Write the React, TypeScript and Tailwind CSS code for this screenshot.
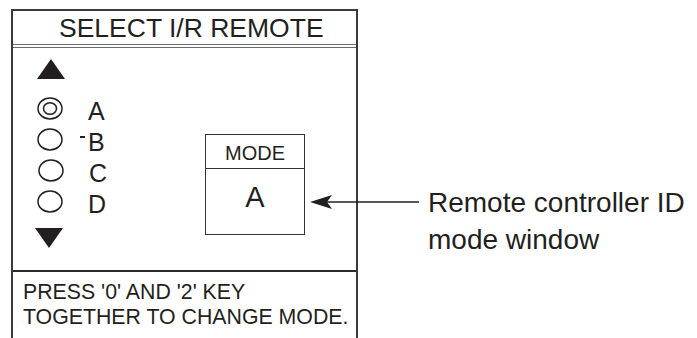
import React from "react";

const Ellipse = ({ selected }: { selected?: boolean }) => (
  <svg width="26" height="23" viewBox="0 0 26 23" className="shrink-0">
    <ellipse cx="13" cy="11.5" rx="12" ry="10.5" fill="none" stroke="#231f20" strokeWidth="1.5" />
    {selected && (
      <ellipse cx="13" cy="11.5" rx="6.5" ry="5.8" fill="none" stroke="#231f20" strokeWidth="1.5" />
    )}
  </svg>
);

const Row = ({ letter, selected, dash }: { letter: string; selected?: boolean; dash?: boolean }) => (
  <div className="flex items-center h-[31px]">
    <Ellipse selected={selected} />
    <span className="relative ml-[25px] mt-[6px] text-[25px] leading-[31px]">
      {dash && <span className="absolute left-[-8px] top-[9px] w-[5px] h-[1.5px] bg-[#231f20]" />}
      {letter}
    </span>
  </div>
);

export default function App() {
  return (
    <div
      className="relative w-[697px] h-[338px] overflow-hidden bg-white text-[#231f20]"
      style={{ fontFamily: '"Liberation Sans", Arial, Helvetica, sans-serif' }}
    >
      <div className="ml-[11px] mt-[9px] w-[347px] h-[340px] border-2 border-b-0 border-[#3a3a3a] flex flex-col">
        <div className="h-[37px] border-b-4 border-double border-[#6b6b6b] pl-[46px] pt-[2px] text-[26.5px] leading-[30px]">
          SELECT I/R REMOTE
        </div>
        <div className="h-[222px] flex">
          <div className="w-[192px] pl-[24px] pt-[11px] flex flex-col">
            <svg width="28" height="20" viewBox="0 0 28 20">
              <polygon points="14,0 28,20 0,20" fill="#231f20" />
            </svg>
            <div className="mt-[14px] flex flex-col">
              <Row letter="A" selected />
              <Row letter="B" dash />
              <div className="pl-px">
                <Row letter="C" />
              </div>
              <Row letter="D" />
            </div>
            <svg width="28" height="20" viewBox="0 0 28 20" className="mt-[11px] -ml-[2px]">
              <polygon points="0,0 28,0 14,20" fill="#231f20" />
            </svg>
          </div>
          <div className="mt-[86px] w-[100px] h-[101px] border-[1.5px] border-[#333] flex flex-col self-start">
            <div className="h-[34px] pt-[3px] border-b-[1.5px] border-[#333] flex items-center justify-center text-[20px] leading-none">
              MODE
            </div>
            <div className="flex-1 pb-[9px] flex items-center justify-center text-[29px] leading-none">A</div>
          </div>
        </div>
        <div className="border-t-2 border-[#2a2a2a] pl-[10px] pt-[8px] text-[21.3px] leading-[25px]">
          <div>PRESS '0' AND '2' KEY</div>
          <div>TOGETHER TO CHANGE MODE.</div>
        </div>
      </div>

      <svg className="absolute left-[308px] top-[192px]" width="114" height="20" viewBox="0 0 114 20">
        <line x1="12" y1="10" x2="111" y2="10" stroke="#231f20" strokeWidth="1.5" />
        <polygon points="2,10 24,3 19,10 24,17" fill="#231f20" />
      </svg>

      <div className="absolute left-[428px] top-[184px] text-[28px] leading-[37px]">
        <div>Remote controller ID</div>
        <div>mode window</div>
      </div>
    </div>
  );
}
